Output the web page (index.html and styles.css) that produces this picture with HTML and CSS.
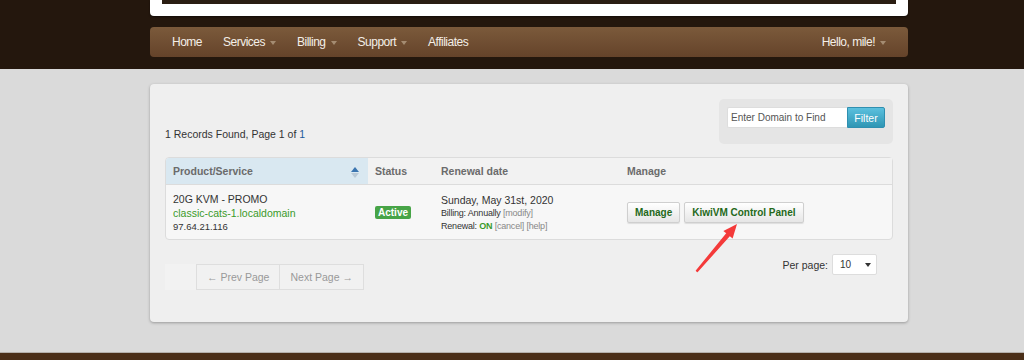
FILE: index.html
```html
<!DOCTYPE html>
<html lang="en">
<head>
  <meta charset="UTF-8">
  <title>My Services</title>
  <link rel="stylesheet" href="styles.css">
</head>
<body>
  <div class="header">
    <div class="wrap">
      <div class="banner"><div class="banner-img"></div></div>
      <div class="navbar">
        <ul class="nav">
          <li>Home</li>
          <li>Services <span class="caret"></span></li>
          <li>Billing <span class="caret"></span></li>
          <li>Support <span class="caret"></span></li>
          <li>Affiliates</li>
        </ul>
        <ul class="nav">
          <li>Hello, mile! <span class="caret"></span></li>
        </ul>
      </div>
    </div>
  </div>

  <div class="main">
    <div class="wrap card">
      <div class="top-row">
        <p class="records">1 Records Found, Page 1 of <a href="#">1</a></p>
        <div class="well">
          <input type="text" placeholder="Enter Domain to Find">
          <button class="btn-filter">Filter</button>
        </div>
      </div>

      <table class="services">
        <thead>
          <tr>
            <th class="sorted">Product/Service <span class="sort"><i class="up"></i><i class="down"></i></span></th>
            <th class="c-status">Status</th>
            <th class="c-date">Renewal date</th>
            <th>Manage</th>
          </tr>
        </thead>
        <tbody>
          <tr>
            <td>
              <div class="pname">20G KVM - PROMO</div>
              <a class="domain" href="#">classic-cats-1.localdomain</a>
              <div class="ip">97.64.21.116</div>
            </td>
            <td><span class="label">Active</span></td>
            <td>
              <div class="date">Sunday, May 31st, 2020</div>
              <div class="small">Billing: Annually <span class="muted">[modify]</span></div>
              <div class="small">Renewal: <b class="on">ON</b> <span class="muted">[cancel]</span> <span class="muted">[help]</span></div>
            </td>
            <td>
              <button class="btn">Manage</button>
              <button class="btn">KiwiVM Control Panel</button>
            </td>
          </tr>
        </tbody>
      </table>

      <div class="bottom-row">
        <div class="pager">
          <span class="pager-spacer"></span>
          <span class="page-btn">&larr; Prev Page</span>
          <span class="page-btn">Next Page &rarr;</span>
        </div>
        <div class="perpage">
          <span>Per page:</span>
          <div class="select">10 <span class="select-caret"></span></div>
        </div>
      </div>

      <svg class="arrow" width="60" height="64" viewBox="0 0 60 64">
        <polygon points="6.6,52.7 7.4,53.3 39.2,17.7 36.8,15.8" fill="#f43a3a" stroke="#f43a3a" stroke-width="1.6" stroke-linejoin="round"/>
        <polygon points="47,6 42.6,20.6 33.4,13" fill="#f43a3a"/>
      </svg>
    </div>
  </div>

  <div class="footer"></div>
</body>
</html>
```

FILE: styles.css
```css
body {
  margin: 0;
  font-family: "Liberation Sans", Arial, sans-serif;
  font-size: 10.5px;
  color: #333;
  background: #dadada;
}
.wrap {
  width: 758px;
  margin: 0 0 0 150px;
}
.header {
  background: #24170d;
  height: 69px;
}
.banner {
  height: 16px;
  background: #fff;
  border-radius: 0 0 4px 4px;
  box-shadow: 0 1px 2px rgba(0, 0, 0, 0.5);
  padding: 0 12px;
}
.banner-img {
  height: 4px;
  background: #2a1d12;
}
.navbar {
  margin-top: 11px;
  height: 30px;
  border-radius: 4px;
  background: linear-gradient(#7b5a3b, #65432a);
  display: flex;
  justify-content: space-between;
  align-items: center;
  padding: 0 22px 0 22px;
}
.nav {
  list-style: none;
  margin: 0;
  padding: 0;
  display: flex;
  gap: 21px;
}
.nav li {
  color: #f4efe8;
  font-size: 12px;
  letter-spacing: -0.5px;
  display: flex;
  align-items: center;
  gap: 5px;
}
.caret {
  display: inline-block;
  border-top: 4px solid #a58c72;
  border-left: 3px solid transparent;
  border-right: 3px solid transparent;
  margin-top: 1px;
}

.main {
  padding: 15px 0 30px;
}
.card {
  position: relative;
  box-sizing: border-box;
  height: 238px;
  background: #efefef;
  border-radius: 4px;
  box-shadow: 0 1px 3px rgba(0, 0, 0, 0.3);
  padding: 15px 15px 0 15px;
}
.top-row {
  display: flex;
  justify-content: space-between;
  align-items: flex-end;
}
.records {
  margin: 0 0 4px;
}
.records a {
  color: #1a5a9a;
  text-decoration: none;
}
.well {
  width: 174px;
  height: 45px;
  box-sizing: border-box;
  padding: 8px 8px 0;
  background: #e5e5e5;
  border-radius: 5px;
  display: flex;
}
.well input {
  box-sizing: border-box;
  width: 120px;
  height: 21px;
  border: 1px solid #ddd;
  border-right: none;
  border-radius: 2px 0 0 2px;
  padding: 0 3px;
  font-family: "Liberation Sans", Arial, sans-serif;
  font-size: 10px;
  outline: none;
}
.well input::placeholder {
  color: #555;
}
.btn-filter {
  flex: none;
  width: 38px;
  height: 21px;
  border: 1px solid #2f8fb0;
  border-radius: 0 2px 2px 0;
  background: linear-gradient(#5bc0de, #2f96b4);
  color: #fff;
  font-family: "Liberation Sans", Arial, sans-serif;
  font-size: 10.5px;
  padding: 0;
}

.services {
  margin-top: 13px;
  width: 100%;
  border-collapse: separate;
  border-spacing: 0;
  border: 1px solid #dcdcdc;
  border-radius: 4px;
  background: #f7f7f7;
}
.services th {
  height: 26px;
  text-align: left;
  font-size: 10.5px;
  font-weight: bold;
  color: #6b6b6b;
  padding: 0 7px;
  border-bottom: 1px solid #dcdcdc;
  background: #f2f2f2;
}
.services th.sorted {
  width: 188px;
  background: #d9e8f1;
  position: relative;
  border-top-left-radius: 3px;
}
.services th.c-status {
  width: 52px;
}
.services th.c-date {
  width: 172px;
}
.sort {
  position: absolute;
  right: 9px;
  top: 9px;
  display: flex;
  flex-direction: column;
  gap: 1px;
}
.sort i {
  display: block;
  border-left: 4px solid transparent;
  border-right: 4px solid transparent;
}
.sort .up {
  border-bottom: 5px solid #3a75b0;
}
.sort .down {
  border-top: 5px solid #b9c9d6;
}
.services td {
  padding: 7px 7px 6px;
  vertical-align: middle;
}
.pname,
.date {
  font-size: 10.5px;
  line-height: 14px;
}
.domain {
  display: block;
  color: #3a9a2a;
  text-decoration: none;
  font-size: 10.5px;
  line-height: 14px;
}
.ip {
  font-size: 9.5px;
  line-height: 13px;
}
.small {
  font-size: 9px;
  letter-spacing: -0.2px;
  line-height: 13px;
}
.muted {
  color: #888;
}
.on {
  color: #3a9a2a;
}
.label {
  display: inline-block;
  background: #47a447;
  color: #fff;
  font-weight: bold;
  font-size: 10px;
  padding: 0 3px;
  line-height: 13px;
  border-radius: 2px;
}
.btn {
  height: 21px;
  padding: 0 7px;
  border: 1px solid #cfcfcf;
  border-radius: 2px;
  background: linear-gradient(#ffffff, #e6e6e6);
  box-shadow: 0 1px 1px rgba(0, 0, 0, 0.1);
  color: #24691a;
  font-family: "Liberation Sans", Arial, sans-serif;
  font-size: 10px;
  font-weight: bold;
  margin-right: 1px;
}

.bottom-row {
  display: flex;
  justify-content: space-between;
  align-items: flex-start;
  margin-top: 13px;
}
.pager {
  display: flex;
  margin-top: 11px;
}
.pager-spacer {
  width: 31px;
  height: 26px;
  background: #f2f2f2;
}
.page-btn {
  box-sizing: border-box;
  height: 26px;
  line-height: 24px;
  padding: 0 10px;
  border: 1px solid #dedede;
  background: #f1f1f1;
  color: #999;
}
.page-btn + .page-btn {
  border-left: none;
}
.perpage {
  display: flex;
  align-items: center;
  gap: 4px;
  margin-right: 16px;
  margin-top: 1px;
}
.select {
  box-sizing: border-box;
  width: 45px;
  height: 21px;
  background: #fff;
  border: 1px solid #ddd;
  border-radius: 2px;
  padding: 0 5px 0 7px;
  font-size: 10px;
  display: flex;
  align-items: center;
  justify-content: space-between;
}
.select-caret {
  border-top: 4px solid #333;
  border-left: 3px solid transparent;
  border-right: 3px solid transparent;
}
.arrow {
  position: absolute;
  left: 540px;
  top: 134px;
}

.footer {
  height: 8px;
  background: #4a2e18;
  border-top: 1px solid #b4b0ac;
}
```
